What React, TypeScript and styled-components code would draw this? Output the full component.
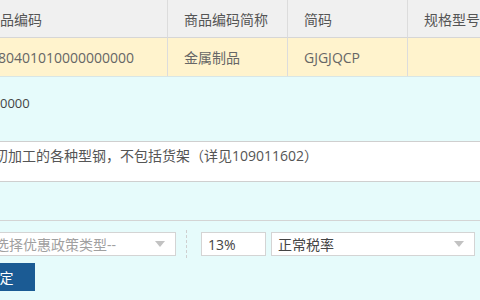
import styled, { createGlobalStyle } from 'styled-components'

const GlobalStyle = createGlobalStyle`
  body {
    margin: 0;
    background-color: #e6fbfb;
    overflow: hidden;
    font-family: 'Open Sans', 'Noto Sans CJK SC', sans-serif;
  }
`

const columns = [
  { title: '商品编码', value: '1080401010000000000', shift: 4 },
  { title: '商品编码简称', value: '金属制品', shift: 0 },
  { title: '简码', value: 'GJGJQCP', shift: 0 },
  { title: '规格型号', value: '', shift: 0 },
]

const App = () => {
  return (
    <Page>
      <GlobalStyle />
      <Table>
        {columns.map((c) => (
          <HeadCell key={c.title}>{c.title}</HeadCell>
        ))}
        {columns.map((c) => (
          <DataCell key={c.title} $shift={c.shift}>
            {c.value}
          </DataCell>
        ))}
      </Table>

      <CodeLine>0000</CodeLine>

      <Description>初加工的各种型钢，不包括货架（详见109011602）</Description>

      <Divider />

      <SelectRow>
        <Select $width={188} $offset={-12} $placeholder>
          <span>选择优惠政策类型--</span>
          <Arrow />
        </Select>
        <DashLine />
        <Select $width={65}>
          <span>13%</span>
        </Select>
        <Select $width={204}>
          <span>正常税率</span>
          <Arrow />
        </Select>
      </SelectRow>

      <Button>确定</Button>
    </Page>
  )
}

const Page = styled.div`
  width: 480px;
  height: 300px;
  overflow: hidden;
`

const Table = styled.div`
  margin-left: -30px;
  display: grid;
  grid-template-columns: 198px 120px 120px 120px;
  border-bottom: 1px solid #d8e6e6;
`

const HeadCell = styled.div`
  height: 37px;
  padding-left: 16px;
  display: flex;
  align-items: center;

  background-color: #f0f0f0;
  border-right: 1px solid #dcdcdc;
  border-bottom: 1px solid #d6d6d6;
  color: #555;
  font-size: 14px;
  white-space: nowrap;
  overflow: hidden;
`

const DataCell = styled(HeadCell)<{ $shift: number }>`
  height: 38px;
  padding-left: ${(p) => 16 - p.$shift}px;
  background-color: #fff3cd;
  border-bottom: none;
  color: #666;
`

const CodeLine = styled.div`
  margin-top: 16px;
  height: 20px;
  line-height: 20px;
  font-size: 13px;
  color: #444;
`

const Description = styled.div`
  margin-top: 28px;
  margin-left: -6px;
  height: 41px;
  padding-top: 4px;
  box-sizing: border-box;
  line-height: 20px;

  background-color: #fff;
  border-top: 1px solid #cfcfcf;
  border-bottom: 1px solid #cfcfcf;
  color: #555;
  font-size: 14px;
  white-space: nowrap;
`

const Divider = styled.div`
  margin-top: 38px;
  height: 1px;
  background-color: #d4d4d4;
`

const SelectRow = styled.div`
  margin-top: 9px;
  display: flex;
  align-items: center;
  gap: 5px;
`

const Select = styled.div<{ $width: number; $offset?: number; $placeholder?: boolean }>`
  width: ${(p) => p.$width}px;
  margin-left: ${(p) => p.$offset ?? 0}px;
  height: 24px;
  box-sizing: border-box;
  padding: 0 10px 0 6px;
  display: flex;
  align-items: center;
  justify-content: space-between;
  flex-shrink: 0;

  background-color: #fff;
  border: 1px solid #d4d4d4;
  color: ${(p) => (p.$placeholder ? '#a0a0a0' : '#444')};
  font-size: 14px;
  white-space: nowrap;
`

const Arrow = styled.i`
  width: 0;
  height: 0;
  border-left: 5px solid transparent;
  border-right: 5px solid transparent;
  border-top: 6px solid #c2c2c2;
`

const DashLine = styled.div`
  height: 28px;
  margin: 0 9px 0 5px;
  border-left: 1px dashed #cfcfcf;
`

const Button = styled.button`
  margin-top: 5px;
  margin-left: -36px;
  width: 71px;
  height: 28px;
  display: block;

  background-color: #1b5b94;
  border: none;
  color: #fff;
  font-family: 'Noto Sans CJK SC', sans-serif;
  font-size: 14px;
`

export default App
